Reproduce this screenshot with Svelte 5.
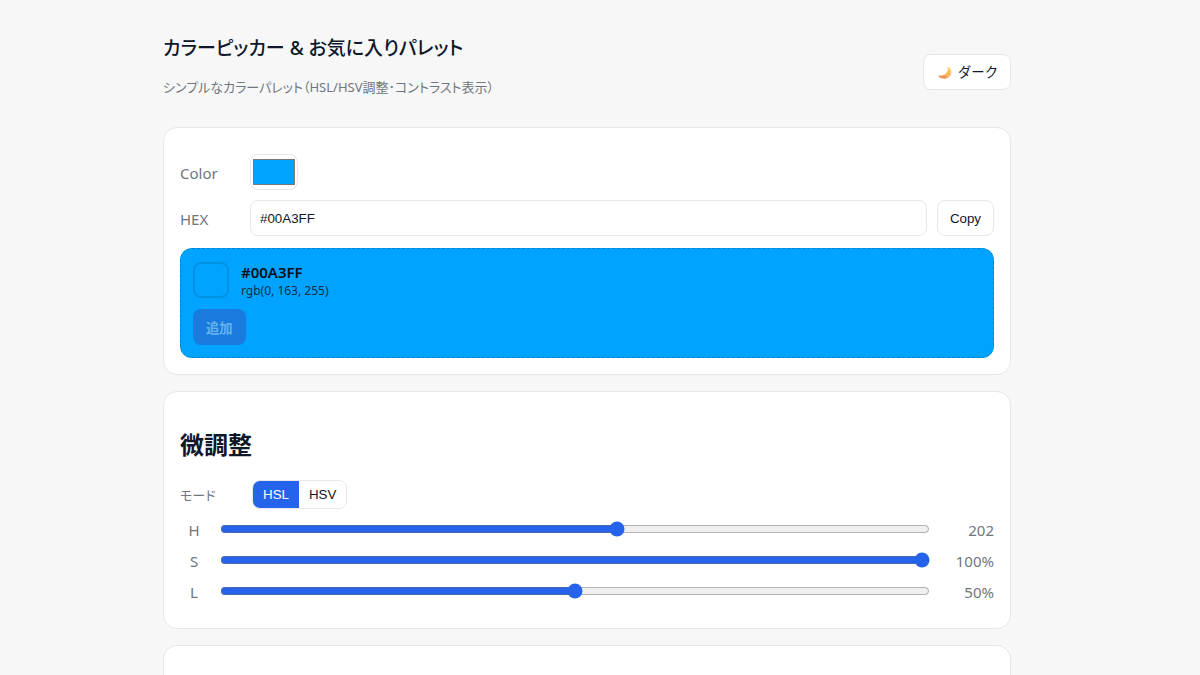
<script>
  let hex = $state('#00A3FF');
  let mode = $state('HSL');
  let dark = $state(false);
  let sliders = $state([
    { id: 'h', label: 'H', value: 202, max: 360, unit: '' },
    { id: 's', label: 'S', value: 100, max: 100, unit: '%' },
    { id: 'l', label: 'L', value: 50, max: 100, unit: '%' }
  ]);
  const valid = $derived(/^#[0-9a-f]{6}$/i.test(hex));
  const rgb = $derived(
    valid ? [1, 3, 5].map((i) => parseInt(hex.slice(i, i + 2), 16)).join(', ') : '0, 0, 0'
  );
</script>

<div class="page">
  <main>
    <header>
      <div>
        <h1>カラーピッカー &amp; お気に入りパレット</h1>
        <p>シンプルなカラーパレット（HSL/HSV調整･コントラスト表示）</p>
      </div>
      <button class="theme" aria-pressed={dark} onclick={() => (dark = !dark)}>
        <svg width="16" height="16" viewBox="0 0 16 16" aria-hidden="true">
          <defs>
            <linearGradient id="moon" x1="0.8" y1="0" x2="0.3" y2="1">
              <stop offset="0" stop-color="#ffd36b" />
              <stop offset="0.6" stop-color="#fdb75e" />
              <stop offset="1" stop-color="#e98a5c" />
            </linearGradient>
          </defs>
          <path d="M11.200 2.600C14.500 3.600 16 6.800 15.100 10C13.700 14.200 8.600 15.700 4.900 14C3.500 13.400 2.700 12.500 2.200 11.200C4.600 12 7.800 11.400 9.800 9.500C11.900 7.600 12.200 5 11.200 2.600Z" fill="url(#moon)" />
          <circle cx="12.600" cy="9.500" r="0.800" fill="#f2a457" />
          <circle cx="8" cy="13" r="0.900" fill="#e08a5a" />
        </svg>
        <span>ダーク</span>
      </button>
    </header>

    <section class="card">
      <div class="row">
        <label for="color">Color</label>
        <input id="color" type="color" value={valid ? hex.toLowerCase() : '#000000'} oninput={(e) => (hex = e.currentTarget.value.toUpperCase())} />
      </div>
      <div class="row">
        <label for="hex">HEX</label>
        <input id="hex" class="hex" type="text" bind:value={hex} />
        <button onclick={() => navigator.clipboard?.writeText(hex)}>Copy</button>
      </div>
      <div class="preview" style:background-color={hex}>
        <div class="sample">
          <div class="swatch"></div>
          <div>
            <div class="name">{hex}</div>
            <div class="rgb">rgb({rgb})</div>
          </div>
        </div>
        <button class="add" disabled>追加</button>
      </div>
    </section>

    <section class="card">
      <h2>微調整</h2>
      <div class="mode">
        <span id="mode-label">モード</span>
        <div class="toggle" role="group" aria-labelledby="mode-label">
          {#each ['HSL', 'HSV'] as m}
            <button class:active={mode === m} aria-pressed={mode === m} onclick={() => (mode = m)}>{m}</button>
          {/each}
        </div>
      </div>
      {#each sliders as s}
        <div class="slider">
          <label for={s.id}>{s.label}</label>
          <input id={s.id} type="range" min="0" max={s.max} bind:value={s.value} />
          <output for={s.id}>{s.value}{s.unit}</output>
        </div>
      {/each}
    </section>

    <section class="card last"></section>
  </main>
</div>

<style>
  :global(html) {
    scrollbar-width: none;
  }
  :global(body) {
    background: #f7f7f7;
  }
  .page {
    padding: 32px 42px 24px 16px;
    color: #0f172a;
    font-family: 'Noto Sans', 'Noto Sans CJK JP', sans-serif;
    font-size: 15px;
    line-height: 22px;
    font-feature-settings: 'palt';
  }
  main {
    max-width: 848px;
    margin: 0 auto;
    display: grid;
    gap: 16px;
  }
  header {
    display: flex;
    align-items: center;
    justify-content: space-between;
  }
  h1 {
    margin: 0 0 13px;
    font-size: 19px;
    line-height: 32px;
    font-weight: 500;
  }
  p {
    margin: 0 0 14px;
    color: #70767f;
    font-size: 13px;
    line-height: 20px;
  }
  button,
  .hex {
    box-sizing: border-box;
    height: 36px;
    border: 1px solid #e5e7eb;
    border-radius: 8px;
    background: #fff;
    color: #0f172a;
    font-family: 'Liberation Sans', 'Noto Sans CJK JP', sans-serif;
  }
  button {
    padding: 0 12px;
    cursor: pointer;
  }
  .theme {
    display: flex;
    align-items: center;
    gap: 6px;
  }
  .card {
    padding: 16px;
    border: 1px solid #e5e7eb;
    border-radius: 14px;
    background: #fff;
  }
  .last {
    min-height: 120px;
  }
  .row {
    display: flex;
    align-items: center;
    gap: 10px;
    margin-top: 10px;
  }
  .row label {
    width: 60px;
  }
  label,
  output,
  .mode span {
    color: #70767f;
  }
  label,
  output {
    padding-top: 2px;
  }
  input[type='color'] {
    box-sizing: border-box;
    width: 48px;
    height: 36px;
    padding: 0;
    border: 1px solid #e5e7eb;
    border-radius: 8px;
    background: #fff;
  }
  .hex {
    flex: 1;
    min-width: 0;
    padding: 0 9px;
  }
  .preview {
    margin-top: 12px;
    padding: 12px;
    border: 1px dashed rgba(0, 0, 0, 0.2);
    border-radius: 12px;
    color: #0b0f19;
  }
  .sample {
    display: flex;
    align-items: center;
    gap: 12px;
    margin-bottom: 10px;
  }
  .swatch {
    box-sizing: border-box;
    width: 36px;
    height: 36px;
    border: 2px solid rgba(0, 0, 0, 0.1);
    border-radius: 8px;
  }
  .name {
    font-size: 15px;
    line-height: 22px;
    font-weight: 600;
  }
  .rgb {
    font-size: 12px;
    line-height: 16px;
    opacity: 0.8;
  }
  .add {
    display: block;
    border-color: transparent;
    background: #2b62c8;
    color: #fff;
    font-weight: 600;
    opacity: 0.6;
    cursor: default;
  }
  .add:disabled {
    color: rgba(255, 255, 255, 0.6);
  }
  h2 {
    margin: 21px 0 19px;
    font-size: 24px;
    line-height: 32px;
    font-weight: 600;
  }
  .mode {
    display: flex;
    align-items: center;
    gap: 12px;
    margin-bottom: 8px;
  }
  .mode span {
    width: 60px;
    font-size: 13px;
  }
  .toggle {
    display: flex;
    overflow: hidden;
    border: 1px solid #e5e7eb;
    border-radius: 8px;
  }
  .toggle button {
    height: 27px;
    padding: 0 10px;
    border: 0;
    border-radius: 0;
  }
  .toggle .active {
    background: #2563eb;
    color: #fff;
  }
  .slider {
    display: grid;
    grid-template-columns: 28px 1fr 56px;
    align-items: center;
    gap: 10px;
    height: 23px;
    margin-bottom: 8px;
  }
  .slider:last-child {
    margin-bottom: 10px;
  }
  .slider label {
    text-align: center;
  }
  .slider input {
    width: 100%;
    margin: 2px;
    accent-color: #2563eb;
  }
  output {
    text-align: right;
  }
</style>
